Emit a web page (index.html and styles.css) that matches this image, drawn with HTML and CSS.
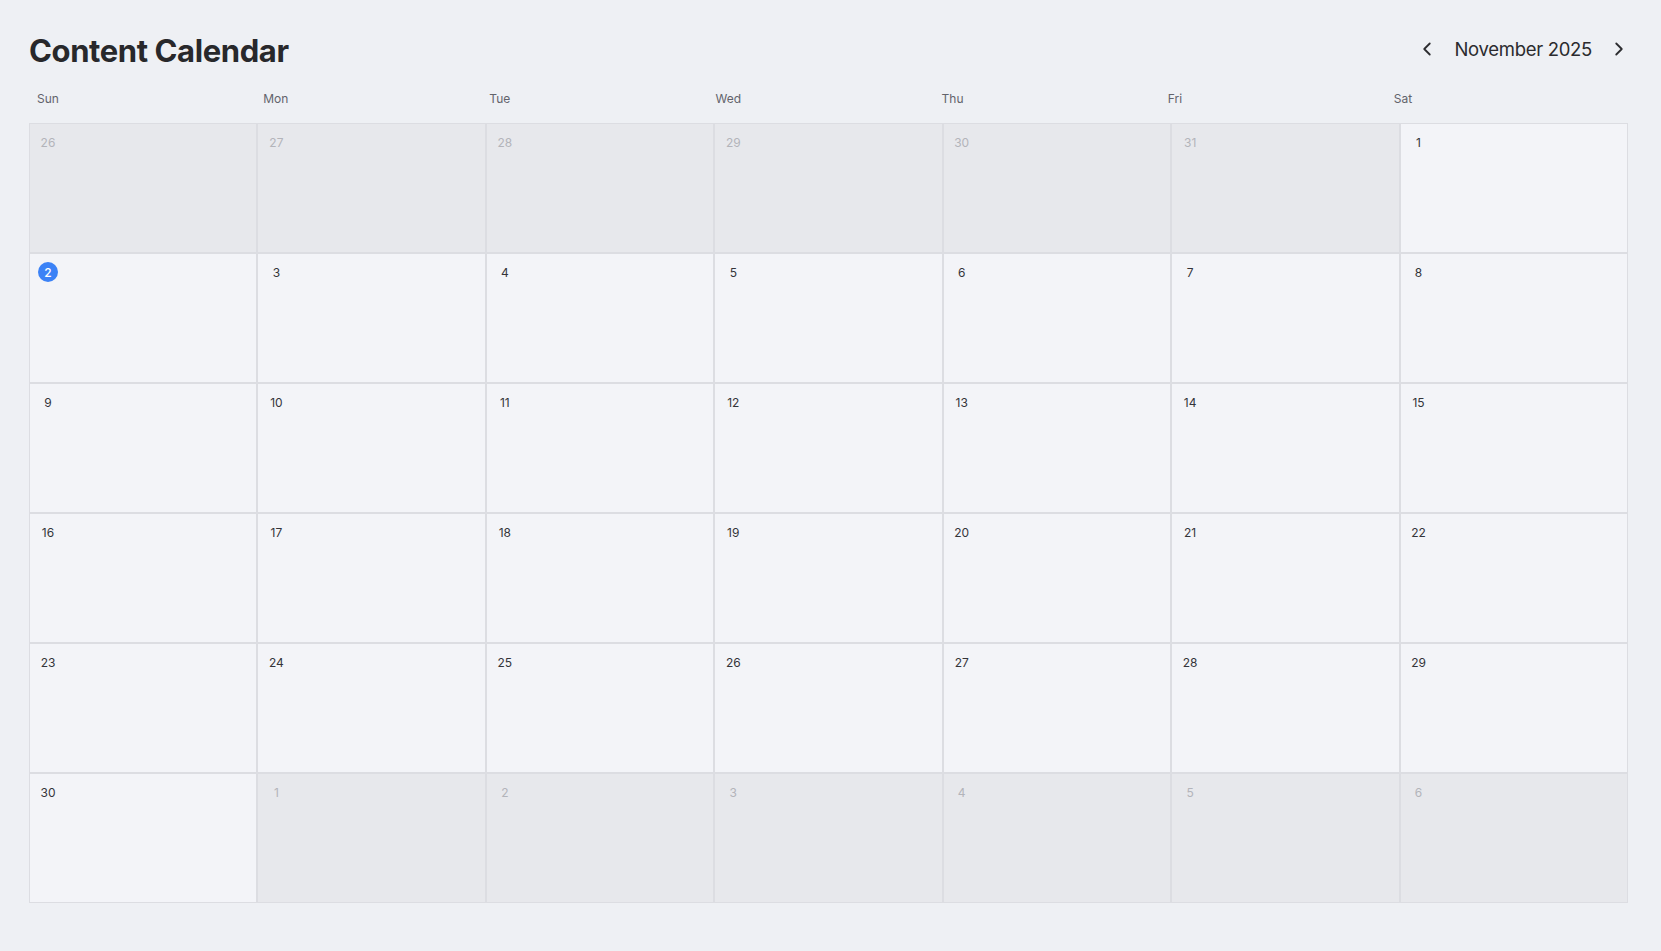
FILE: index.html
```html
<!DOCTYPE html>
<html lang="en">
<head>
<meta charset="UTF-8">
<title>Content Calendar</title>
<link rel="stylesheet" href="styles.css">
</head>
<body>
<div class="page">
    <div class="header">
        <h1 class="title">Content Calendar</h1>
        <div class="month-nav">
            <button class="nav-btn" aria-label="Previous month">
                <svg width="22" height="22" viewBox="0 0 24 24" fill="none" stroke="currentColor" stroke-width="2" stroke-linecap="round" stroke-linejoin="round"><path d="m15 18-6-6 6-6"/></svg>
            </button>
            <span class="month-label">November 2025</span>
            <button class="nav-btn" aria-label="Next month">
                <svg width="22" height="22" viewBox="0 0 24 24" fill="none" stroke="currentColor" stroke-width="2" stroke-linecap="round" stroke-linejoin="round"><path d="m9 18 6-6-6-6"/></svg>
            </button>
        </div>
    </div>

    <div class="weekdays">
        <div>Sun</div><div>Mon</div><div>Tue</div><div>Wed</div><div>Thu</div><div>Fri</div><div>Sat</div>
    </div>

    <div class="calendar">
        <div class="day outside"><span class="num">26</span></div>
        <div class="day outside"><span class="num">27</span></div>
        <div class="day outside"><span class="num">28</span></div>
        <div class="day outside"><span class="num">29</span></div>
        <div class="day outside"><span class="num">30</span></div>
        <div class="day outside"><span class="num">31</span></div>
        <div class="day"><span class="num">1</span></div>

        <div class="day"><span class="num today">2</span></div>
        <div class="day"><span class="num">3</span></div>
        <div class="day"><span class="num">4</span></div>
        <div class="day"><span class="num">5</span></div>
        <div class="day"><span class="num">6</span></div>
        <div class="day"><span class="num">7</span></div>
        <div class="day"><span class="num">8</span></div>

        <div class="day"><span class="num">9</span></div>
        <div class="day"><span class="num">10</span></div>
        <div class="day"><span class="num">11</span></div>
        <div class="day"><span class="num">12</span></div>
        <div class="day"><span class="num">13</span></div>
        <div class="day"><span class="num">14</span></div>
        <div class="day"><span class="num">15</span></div>

        <div class="day"><span class="num">16</span></div>
        <div class="day"><span class="num">17</span></div>
        <div class="day"><span class="num">18</span></div>
        <div class="day"><span class="num">19</span></div>
        <div class="day"><span class="num">20</span></div>
        <div class="day"><span class="num">21</span></div>
        <div class="day"><span class="num">22</span></div>

        <div class="day"><span class="num">23</span></div>
        <div class="day"><span class="num">24</span></div>
        <div class="day"><span class="num">25</span></div>
        <div class="day"><span class="num">26</span></div>
        <div class="day"><span class="num">27</span></div>
        <div class="day"><span class="num">28</span></div>
        <div class="day"><span class="num">29</span></div>

        <div class="day"><span class="num">30</span></div>
        <div class="day outside"><span class="num">1</span></div>
        <div class="day outside"><span class="num">2</span></div>
        <div class="day outside"><span class="num">3</span></div>
        <div class="day outside"><span class="num">4</span></div>
        <div class="day outside"><span class="num">5</span></div>
        <div class="day outside"><span class="num">6</span></div>
    </div>
</div>
</body>
</html>
```

FILE: styles.css
```css
body {
    margin: 0;
    background-color: #eef0f4;
    font-family: Inter, "Noto Sans", sans-serif;
    color: #27272a;
}
.page {
    padding: 32px 33px 0 29px;
}
.header {
    display: flex;
    align-items: center;
    justify-content: space-between;
    height: 38px;
}
.title {
    margin: 0;
    font-size: 31px;
    font-weight: 700;
    letter-spacing: -0.4px;
    line-height: 38px;
    color: #28282b;
}
.month-nav {
    display: flex;
    align-items: center;
    gap: 16px;
    margin-right: -2px;
    margin-top: -4px;
}
.nav-btn {
    display: flex;
    padding: 0;
    border: none;
    background: none;
    color: #2d2d30;
    cursor: pointer;
}
.month-label {
    font-size: 18.5px;
    font-weight: 400;
    letter-spacing: -0.3px;
    color: #2b2b2e;
}
.weekdays {
    display: grid;
    grid-template-columns: repeat(7, 1fr);
    margin-top: 21px;
    margin-bottom: 16px;
    padding: 0 8px;
    font-size: 12px;
    line-height: 16px;
    color: #62636b;
}
.calendar {
    display: grid;
    grid-template-columns: repeat(7, 1fr);
    grid-auto-rows: 130px;
}
.day {
    background-color: #f3f4f8;
    border: 1px solid #dcdde2;
    padding: 8px;
}
.day.outside {
    background-color: #e7e8ec;
}
.num {
    display: flex;
    align-items: center;
    justify-content: center;
    width: 20px;
    height: 20px;
    border-radius: 50%;
    font-size: 12px;
    color: #34343a;
}
.outside .num {
    color: #b3b4ba;
}
.num.today {
    background-color: #3b82f6;
    color: #fff;
    font-weight: 500;
}
```
